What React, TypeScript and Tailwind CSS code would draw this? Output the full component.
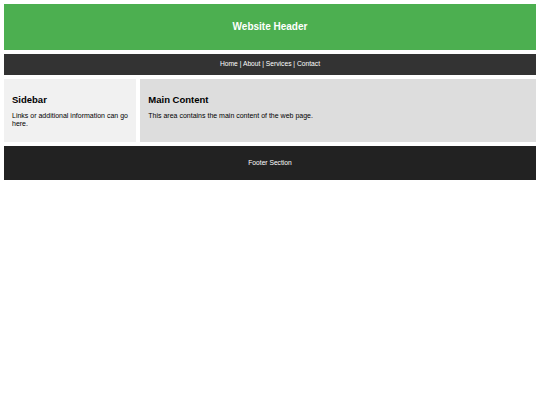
export default function App() {
  return (
    <div
      className="w-[540px] h-[405px] bg-white p-[4px] flex flex-col gap-[4.1px]"
      style={{ fontFamily: '"Liberation Sans", Arial, sans-serif' }}
    >
      <header className="h-[45.6px] bg-[#4CAF50] flex items-center justify-center">
        <h1 className="text-white font-bold text-[10px] leading-[12px]">Website Header</h1>
      </header>
      <nav className="h-[20.9px] bg-[#333333] flex items-center justify-center">
        <span className="text-white text-[6.7px] leading-[8px]">Home | About | Services | Contact</span>
      </nav>
      <div className="flex gap-[4.3px] h-[63.6px]">
        <aside className="w-[132px] shrink-0 bg-[#f1f1f1] px-[8px] pt-[8px]">
          <h3 className="mt-[7px] text-[9.5px] leading-[11px] font-bold text-black">Sidebar</h3>
          <p className="mt-[7.5px] text-[7px] leading-[7.6px] text-black">
            Links or additional information can go here.
          </p>
        </aside>
        <main className="flex-1 bg-[#dddddd] px-[8px] pt-[8px]">
          <h3 className="mt-[7px] text-[9.5px] leading-[11px] font-bold text-black">Main Content</h3>
          <p className="mt-[7.5px] text-[7px] leading-[7.6px] text-black">
            This area contains the main content of the web page.
          </p>
        </main>
      </div>
      <footer className="h-[34px] bg-[#222222] flex items-center justify-center">
        <span className="text-white text-[6.7px] leading-[8px]">Footer Section</span>
      </footer>
    </div>
  );
}
